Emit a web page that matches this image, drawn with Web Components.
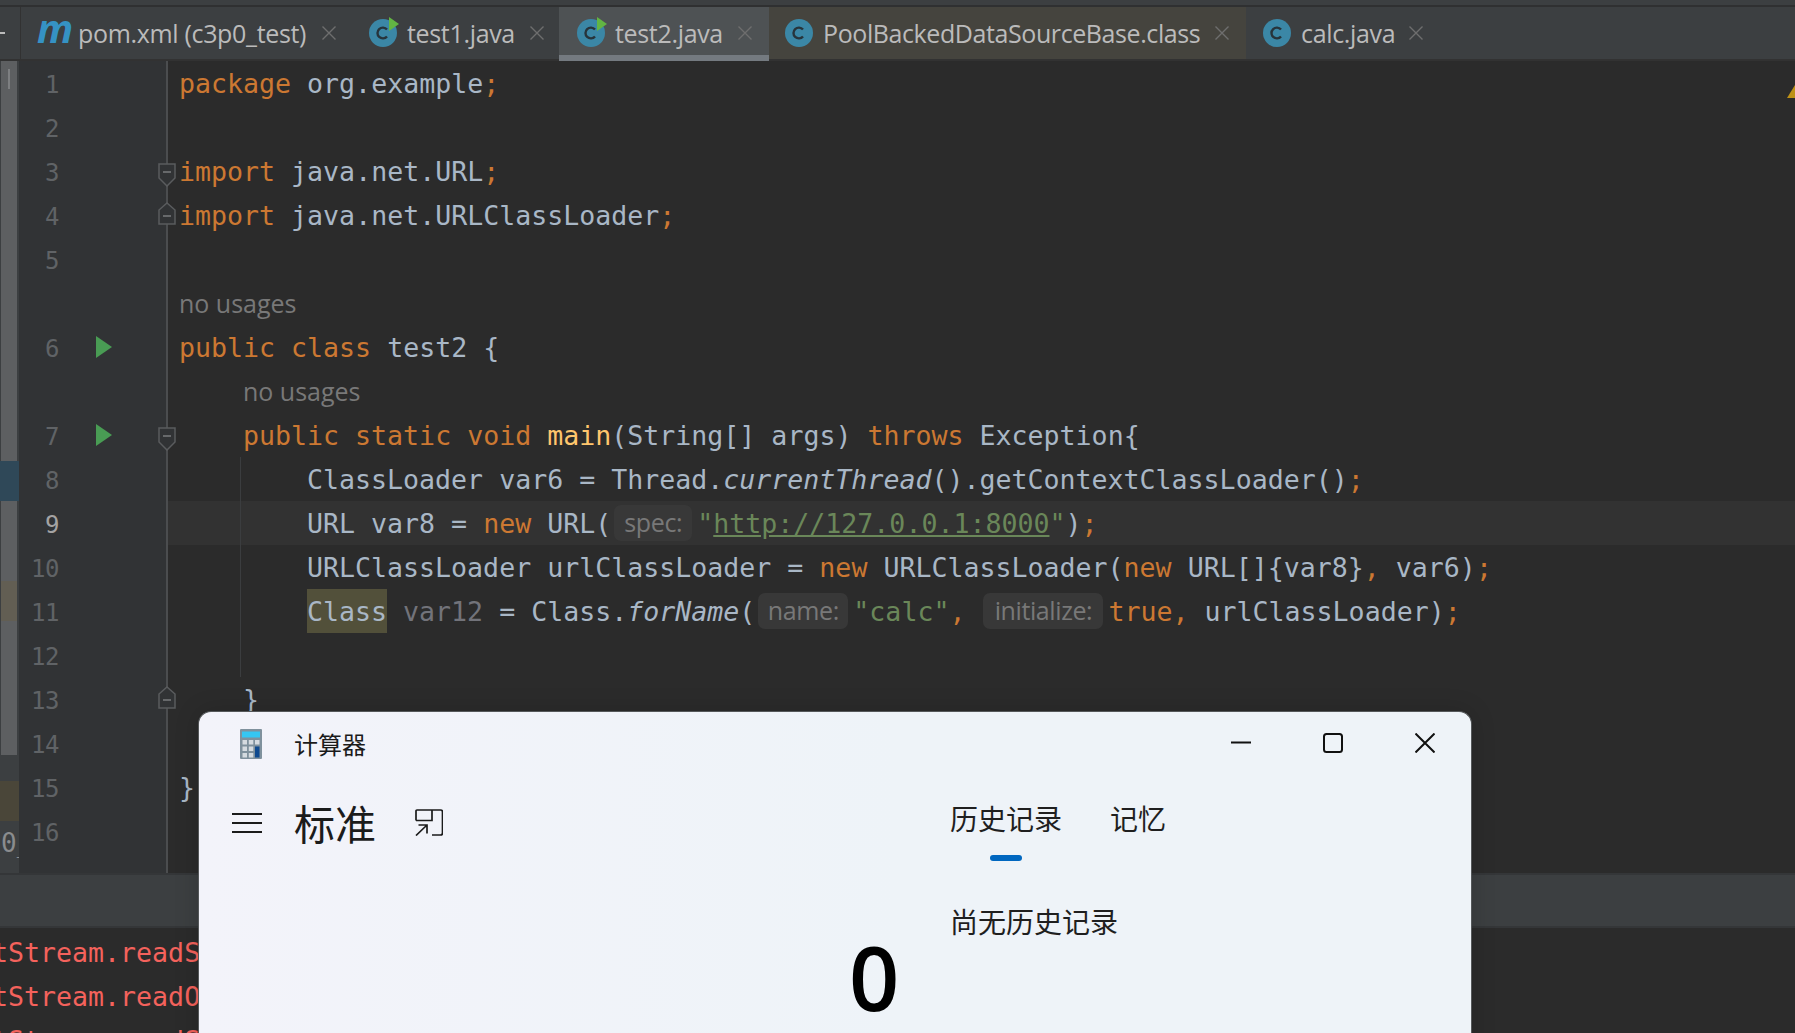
<!DOCTYPE html>
<html lang="en">
<head>
<meta charset="utf-8">
<title>test2.java</title>
<style>
html, body { margin: 0; height: 100%; overflow: hidden; background: #2b2b2b; }
body { position: relative; display: flex; flex-direction: column; height: 1033px; }
</style>
</head>
<body>
<ide-tabs>
  <ide-tab kind="m" style="--label:229px;--pl:16px;--pr:15px">pom.xml (c3p0_test)</ide-tab>
  <ide-tab kind="run" style="--label:108px;--pl:18px;--pr:15px">test1.java</ide-tab>
  <ide-tab kind="run" active style="--label:108px;--pl:18px;--pr:17px">test2.java</ide-tab>
  <ide-tab kind="c" tint style="--label:377px;--pl:16px;--pr:17px;--ls:-0.41px">PoolBackedDataSourceBase.class</ide-tab>
  <ide-tab kind="c" style="--label:93px;--pl:17px;--pr:15px">calc.java</ide-tab>
</ide-tabs>

<ide-editor>
  <code-line num="1"><span class="k">package</span> org.example<span class="k">;</span></code-line>
  <code-line num="2"></code-line>
  <code-line num="3" fold="open"><span class="k">import</span> java.net.URL<span class="k">;</span></code-line>
  <code-line num="4" fold="close"><span class="k">import</span> java.net.URLClassLoader<span class="k">;</span></code-line>
  <code-line num="5"></code-line>
  <code-line><usage-hint>no usages</usage-hint></code-line>
  <code-line num="6" run><span class="k">public class</span> test2 {</code-line>
  <code-line indent="1"><usage-hint>no usages</usage-hint></code-line>
  <code-line num="7" run fold="open" indent="1"><span class="k">public static void</span> <span class="m">main</span>(String[] args) <span class="k">throws</span> Exception{</code-line>
  <code-line num="8" indent="2" guide>ClassLoader var6 = Thread.<i>currentThread</i>().getContextClassLoader()<span class="k">;</span></code-line>
  <code-line num="9" indent="2" guide current>URL var8 = <span class="k">new</span> URL(<inlay-hint style="--w:78px;--l:3px;--r:5px">spec:</inlay-hint><span class="s">"<u>http://127.0.0.1:8000</u>"</span>)<span class="k">;</span></code-line>
  <code-line num="10" indent="2" guide>URLClassLoader urlClassLoader = <span class="k">new</span> URLClassLoader(<span class="k">new</span> URL[]{var8}<span class="k">,</span> var6)<span class="k">;</span></code-line>
  <code-line num="11" indent="2" guide><span class="h">Class</span> <span class="d">var12</span> = Class.<i>forName</i>(<inlay-hint style="--w:90px;--l:3px;--r:5px">name:</inlay-hint><span class="s">"calc"</span><span class="k">,</span> <inlay-hint style="--w:120px;--l:2px;--r:5px">initialize:</inlay-hint><span class="k">true,</span> urlClassLoader)<span class="k">;</span></code-line>
  <code-line num="12" indent="2" guide></code-line>
  <code-line num="13" fold="close" indent="1">}</code-line>
  <code-line num="14"></code-line>
  <code-line num="15">}</code-line>
  <code-line num="16"></code-line>
  <code-line class="rest"></code-line>
</ide-editor>

<ide-toolbar></ide-toolbar>

<ide-console>
  <div>tStream.readSerialData(ObjectInputStream.java:2173)</div>
  <div>tStream.readObject0(ObjectInputStream.java:1661)</div>
  <div>tStream.readSerialData(ObjectInputStream.java:2173)</div>
</ide-console>

<calc-window></calc-window>

<script>
const MONO = '"DejaVu Sans Mono", "Liberation Mono", monospace';
const UI = '"Open Sans", "Noto Sans", sans-serif';
const CJK = '"Noto Sans CJK SC", "Noto Sans", sans-serif';

function shadow(el, html) {
    el.attachShadow({ mode: "open" }).innerHTML = html.trim();
}

class IdeTabs extends HTMLElement {
    constructor() {
        super();
        shadow(this, `
<style>
:host { display: block; flex: none; height: 61px; background: #3c3f41; }
.gap { height: 5px; }
.line { height: 2px; background: #2f3031; }
.bar { display: flex; align-items: flex-start; height: 54px; box-shadow: inset 0 -2px #323232; }
.stub { width: 20px; height: 52px; border-right: 1px solid #323232; position: relative; box-sizing: content-box; }
.stub::after { content: ""; position: absolute; left: 0; top: 25px; width: 5px; height: 2px; background: #bbb; }
</style>
<div class="gap"></div><div class="line"></div>
<div class="bar"><div class="stub"></div><slot></slot></div>`);
    }
}

const TAB_ICONS = {
    m: `<span class="maven">m</span>`,
    c: `<svg width="28" height="28" viewBox="0 0 28 28"><circle cx="14" cy="14" r="14" fill="#3b87a6"/><path d="M18 10.5a5.4 5.4 0 1 0 0 7" fill="none" stroke="#27343b" stroke-width="2.4"/></svg>`,
    run: `<svg width="28" height="28" viewBox="0 0 28 28"><circle cx="14" cy="14" r="14" fill="#3b87a6"/><path d="M18 10.5a5.4 5.4 0 1 0 0 7" fill="none" stroke="#27343b" stroke-width="2.4"/><path d="M20 -2 L30 5 L20 12 Z" fill="#62b543"/></svg>`
};

class IdeTab extends HTMLElement {
    constructor() {
        super();
        const kind = this.getAttribute("kind");
        shadow(this, `
<style>
:host { display: flex; align-items: center; gap: 10px; height: 52px; padding: 0 var(--pr) 0 var(--pl); flex: none;
        font: 25px ${UI}; color: #bbbbbb; }
:host([active]) { background: #4e5254; padding-bottom: 2px; box-shadow: inset 0 -6px #747a80; }
:host([tint]) { background: #45443e; }
.label { display: block; width: var(--label); white-space: nowrap; letter-spacing: var(--ls, -0.33px); }
svg { display: block; overflow: visible; }
.maven { width: 31px; font: italic 700 40px/40px ${UI}; color: #3592c4; text-align: center; margin-top: -10px; }
.x { width: 14px; height: 14px; margin-left: 5px; }
</style>
${TAB_ICONS[kind]}
<span class="label"><slot></slot></span>
<svg class="x" viewBox="0 0 14 14"><path d="M0.5 0.5L13.5 13.5M13.5 0.5L0.5 13.5" stroke="#6e6e6e" stroke-width="1.4" fill="none"/></svg>`);
    }
}

class IdeEditor extends HTMLElement {
    constructor() {
        super();
        shadow(this, `
<style>
:host { display: grid; grid-template-columns: 19px 1fr; flex: none; height: 812px; position: relative; }
.stripe { display: flex; flex-direction: column; background: #3c3f41; overflow: hidden; }
.thumb { background: #5d5f61; margin: 0 2px 0 1px; }
.mark { flex: none; }
.tail { flex: 1; padding-left: 1px; font: 26px/44px ${MONO}; color: #8a8c8e; white-space: nowrap; }
.tick { position: absolute; left: 8px; top: 8px; width: 2px; height: 20px; background: #7d7f81; }
.rows { display: flex; flex-direction: column; min-width: 0; }
.warn { position: absolute; right: 0; top: 24px; }
</style>
<div class="stripe">
  <div class="thumb" style="height:400px"></div>
  <div class="mark" style="height:40px;background:#2f4858"></div>
  <div class="thumb" style="height:80px"></div>
  <div class="thumb" style="height:40px;background:#625e53"></div>
  <div class="thumb" style="height:134px"></div>
  <div class="mark" style="height:26px"></div>
  <div class="mark" style="height:40px;background:#4a4639"></div>
  <div class="tail">0_</div>
</div>
<div class="tick"></div>
<div class="rows"><slot></slot></div>
<svg class="warn" width="8" height="13" viewBox="0 0 8 13"><path d="M8 0V13H0Z" fill="#be9117"/></svg>`);
    }
}

const FOLD = {
    open: `<path d="M1 1H17V15L9 23L1 15Z" fill="#313335" stroke="#5a5c5e" stroke-width="1.5"/><path d="M5 9H13" stroke="#7a7c7e" stroke-width="1.5"/>`,
    close: `<path d="M1 22H17V8L9 1L1 8Z" fill="#313335" stroke="#5a5c5e" stroke-width="1.5"/><path d="M5 14H13" stroke="#7a7c7e" stroke-width="1.5"/>`
};

class CodeLine extends HTMLElement {
    constructor() {
        super();
        const num = this.getAttribute("num") || "";
        const fold = this.getAttribute("fold");
        const run = this.hasAttribute("run");
        const indent = Number(this.getAttribute("indent") || 0);
        const isRest = this.classList.contains("rest");
        shadow(this, `
<style>
:host { display: grid; grid-template-columns: 149px 1fr; height: ${isRest ? "20px" : "44px"}; flex: none; }
:host(.rest) { flex: 1; }
.gutter { position: relative; display: flex; align-items: center; background: #313335; border-right: 2px solid #4b4d4f; z-index: 1; }
.num { width: 40px; text-align: right; font: 24px/44px ${MONO}; letter-spacing: -0.5px; color: #606366; position: relative; top: 2px; }
:host([current]) .num { color: #a4a3a3; }
.run { margin-left: 37px; }
.fold { position: absolute; left: 139px; }
.fold.open { top: 14px; }
.fold.close { top: 9px; }
.code { position: relative; padding-left: ${11 + indent * 64}px; font: 26.6px/46px ${MONO}; color: #a9b7c6; white-space: pre; overflow: hidden; }
:host([current]) .code { background: #323232; }
:host([guide]) .code::before { content: ""; position: absolute; left: 72px; top: 0; bottom: 0; width: 1px; background: #3b3d3f; }
::slotted(.k) { color: #cc7832; }
::slotted(.m) { color: #ffc66d; }
::slotted(.s) { color: #6a8759; }
::slotted(.d) { color: #72737a; }
::slotted(.h) { background: #52503a; display: inline-block; height: 44px; line-height: 46px; vertical-align: top; }
</style>
<div class="gutter">
  <span class="num">${num}</span>
  ${run ? `<svg class="run" width="16" height="22" viewBox="0 0 16 22"><path d="M0 0L16 11L0 22Z" fill="#499c54"/></svg>` : ""}
  ${fold ? `<svg class="fold ${fold}" width="18" height="24" viewBox="0 0 18 24">${FOLD[fold]}</svg>` : ""}
</div>
<div class="code"><slot></slot></div>`);
    }
}

class UsageHint extends HTMLElement {
    constructor() {
        super();
        shadow(this, `
<style>
:host { display: inline-block; font: 25px/44px ${UI}; color: #787878; white-space: nowrap; }
</style><slot></slot>`);
    }
}

class InlayHint extends HTMLElement {
    constructor() {
        super();
        shadow(this, `
<style>
:host { display: inline-block; box-sizing: border-box; width: var(--w); margin: 0 var(--r) 0 var(--l); height: 36px; vertical-align: top; margin-top: 4px; text-align: center;
        border-radius: 7px; background: #383838; color: #787878; font: 25px/35px ${UI}; letter-spacing: -0.4px; white-space: nowrap; }
</style><slot></slot>`);
    }
}

class IdeToolbar extends HTMLElement {
    constructor() {
        super();
        shadow(this, `
<style>
:host { display: block; flex: none; height: 55px; box-sizing: border-box; background: #3c3f41; border-top: 2px solid #343638; border-bottom: 2px solid #343638; }
</style>`);
    }
}

class IdeConsole extends HTMLElement {
    constructor() {
        super();
        shadow(this, `
<style>
:host { display: block; flex: 1; overflow: hidden; padding: 3px 0 0; margin-left: -8px; background: #2b2b2b; font: 26.6px/44px ${MONO}; color: #f4625c; white-space: nowrap; }
</style><slot></slot>`);
    }
}

class CalcWindow extends HTMLElement {
    constructor() {
        super();
        shadow(this, `
<style>
:host { position: absolute; left: 198px; top: 711px; width: 1274px; height: 340px; box-sizing: border-box; display: flex; flex-direction: column;
        border: 1.5px solid #55585a; border-bottom: 0; border-radius: 13px 13px 0 0; overflow: hidden;
        background: linear-gradient(90deg, #f3f3fa, #eef3f8 55%); color: #1b1b1b;
        box-shadow: 0 0 24px rgba(0,0,0,.15); font-family: ${CJK}; }
.title { display: flex; align-items: center; height: 64px; flex: none; padding-left: 41px; }
.title svg.app { flex: none; }
.title .name { margin-left: 32px; font-size: 24px; line-height: 30px; }
.controls { margin-left: auto; display: flex; gap: 72px; padding-right: 36px; margin-top: -2px; }
.controls svg { display: block; }
.main { display: grid; grid-template-columns: 751px 1fr; flex: 1; }
.left { padding-left: 33px; }
.mode { display: flex; align-items: center; height: 60px; margin-top: 16px; }
.mode .label { margin-left: 32px; font-size: 41px; line-height: 58px; }
.mode .pin { margin-left: 39px; }
.mode svg { display: block; }
.mode .menu { margin-top: 2px; }
.zero { margin-top: 81px; padding-left: 617px; font: 600 88px/88px ${UI}; color: #000; }
.tabs { display: flex; gap: 48px; margin-top: 22px; font-size: 28px; line-height: 40px; color: #1f1f1f; }
.tab { position: relative; }
.tab.on::after { content: ""; position: absolute; left: 40px; top: 57px; width: 32px; height: 6px; border-radius: 3px; background: #0067c0; }
.none { margin-top: 63px; font-size: 28px; line-height: 40px; color: #1f1f1f; }
</style>
<div class="title">
  <svg class="app" width="22" height="30" viewBox="0 0 22 30">
    <rect width="22" height="30" rx="1" fill="#7f919d"/>
    <rect x="2" y="2.5" width="18" height="6" fill="#35c6f2"/>
    <g fill="#d5dbe0">
      <rect x="2.5" y="11" width="4.5" height="4.5"/><rect x="8.8" y="11" width="4.5" height="4.5"/><rect x="15" y="11" width="4.5" height="4.5"/>
      <rect x="2.5" y="17.5" width="4.5" height="4.5"/><rect x="8.8" y="17.5" width="4.5" height="4.5"/>
      <rect x="2.5" y="24" width="4.5" height="4.5"/><rect x="8.8" y="24" width="4.5" height="4.5"/>
    </g>
    <rect x="15" y="17.5" width="4.5" height="11" fill="#0f4a8f"/>
  </svg>
  <span class="name">计算器</span>
  <div class="controls">
    <svg width="20" height="20" viewBox="0 0 20 20"><path d="M0 9.5H20" stroke="#111" stroke-width="2"/></svg>
    <svg width="20" height="20" viewBox="0 0 20 20"><rect x="1" y="1" width="18" height="18" rx="2.5" fill="none" stroke="#111" stroke-width="2"/></svg>
    <svg width="20" height="20" viewBox="0 0 20 20"><path d="M0.5 0.5L19.5 19.5M19.5 0.5L0.5 19.5" stroke="#111" stroke-width="2"/></svg>
  </div>
</div>
<div class="main">
  <div class="left">
    <div class="mode">
      <svg class="menu" width="30" height="22" viewBox="0 0 30 22"><path d="M0 2H30M0 11H30M0 20H30" stroke="#1b1b1b" stroke-width="2"/></svg>
      <span class="label">标准</span>
      <svg class="pin" width="28" height="27" viewBox="0 0 28 27"><path d="M1 11.5V2Q1 1 2 1H25.5Q27.5 1 27.5 3V24Q27.5 26 25.5 26H17M1 11.5H17V1M1 26.5L12 16M3.5 16H12V24.5" fill="none" stroke="#1b1b1b" stroke-width="1.7"/></svg>
    </div>
    <div class="zero">0</div>
  </div>
  <div class="right">
    <div class="tabs"><span class="tab on">历史记录</span><span class="tab">记忆</span></div>
    <div class="none">尚无历史记录</div>
  </div>
</div>`);
    }
}

customElements.define("ide-tabs", IdeTabs);
customElements.define("ide-tab", IdeTab);
customElements.define("ide-editor", IdeEditor);
customElements.define("code-line", CodeLine);
customElements.define("usage-hint", UsageHint);
customElements.define("inlay-hint", InlayHint);
customElements.define("ide-toolbar", IdeToolbar);
customElements.define("ide-console", IdeConsole);
customElements.define("calc-window", CalcWindow);
</script>
</body>
</html>
